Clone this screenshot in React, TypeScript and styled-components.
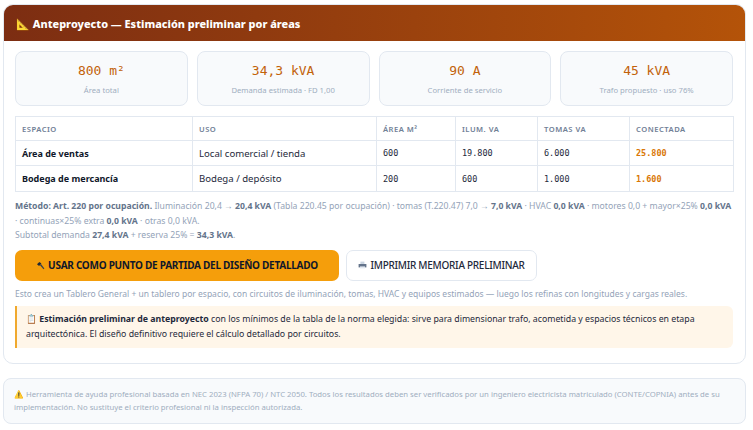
import React from "react"
import styled, { createGlobalStyle } from "styled-components"

const GlobalStyle = createGlobalStyle`
    html, body {
        margin: 0;
        padding: 0;
        background: #fff;
    }
    body {
        font-family: "Noto Sans", "Open Sans", sans-serif;
        color: #0f172a;
    }
`

const Page = styled.div`
    width: 753px;
    height: 430px;
    overflow: hidden;
    padding: 4px 7px 0 3px;
    box-sizing: border-box;
`

const Panel = styled.section`
    border: 1px solid #e2e8f0;
    border-radius: 10px;
    overflow: hidden;
    background: #fff;
`

const PanelHeader = styled.header`
    height: 36px;
    padding: 0 12px;
    display: flex;
    align-items: center;
    gap: 3px;
    color: #fff;
    font-size: 10.9px;
    font-weight: 800;
    background: linear-gradient(90deg, #7c2d12, #b45309);
`

const PanelBody = styled.div`
    padding: 10px 12px 15px 11px;
`

const StatGrid = styled.div`
    display: grid;
    grid-template-columns: repeat(4, 1fr);
    gap: 9px;
    margin-bottom: 10px;
`

const StatCard = styled.div`
    height: 55px;
    box-sizing: border-box;
    border: 1px solid #e2e8f0;
    border-radius: 8px;
    background: #f8fafc;
    display: flex;
    flex-direction: column;
    align-items: center;
    justify-content: center;
`

const StatValue = styled.div`
    font-family: "DejaVu Sans Mono", monospace;
    font-size: 13px;
    line-height: 18px;
    color: #c2620a;
    margin-bottom: 5px;
`

const StatLabel = styled.div`
    font-size: 7.7px;
    line-height: 11px;
    color: #a0aec0;
`

const Table = styled.table`
    width: 100%;
    border-collapse: collapse;
    table-layout: fixed;
    margin-bottom: 7px;
`

const Row = styled.tr<{ $h: number }>`
    height: ${(p) => p.$h}px;
`

const Th = styled.th<{ $w: number }>`
    box-sizing: border-box;
    width: ${(p) => p.$w}px;
    padding: 0 6px;
    border: 1px solid #e2e8f0;
    font-size: 7.6px;
    font-weight: 600;
    letter-spacing: 0.5px;
    text-align: left;
    color: #718096;
`

const Td = styled.td`
    padding: 0 6px;
    border: 1px solid #e2e8f0;
    font-size: 9.6px;
    color: #1e293b;
`

const NameCell = styled(Td)`
    font-size: 9px;
    font-weight: 700;
    color: #0f172a;
`

const NumCell = styled(Td)<{ $hot?: boolean }>`
    font-family: "DejaVu Sans Mono", monospace;
    font-size: 8.5px;
    color: ${(p) => (p.$hot ? "#d97706" : "#1e293b")};
    font-weight: ${(p) => (p.$hot ? 700 : 400)};
`

const Method = styled.p`
    margin: 0 0 7px;
    font-size: 8.67px;
    line-height: 14.5px;
    color: #94a3b8;

    strong {
        color: #64748b;
        font-weight: 700;
    }
`

const Actions = styled.div`
    display: flex;
    gap: 7px;
    margin-bottom: 6px;
`

const ActionButton = styled.button`
    height: 31px;
    box-sizing: border-box;
    border-radius: 7px;
    display: flex;
    align-items: center;
    justify-content: center;
    gap: 3px;
    font-family: inherit;
    font-size: 10px;
    letter-spacing: -0.27px;
    padding: 0;
`

const PrimaryButton = styled(ActionButton)`
    width: 324px;
    border: 0;
    background: #f59e0b;
    color: #0f172a;
    font-weight: 700;
`

const SecondaryButton = styled(ActionButton)`
    width: 191px;
    border: 1px solid #e2e8f0;
    background: #fff;
    color: #1e293b;
    font-weight: 500;
`

const Hint = styled.p`
    margin: 0 0 5px;
    font-size: 8.5px;
    line-height: 14px;
    color: #94a3b8;
`

const Notice = styled.div`
    padding: 6px 10px 6px 9px;
    border-left: 2px solid #f0a92e;
    border-radius: 0 6px 6px 0;
    background: #fff6e9;
    font-size: 8.75px;
    line-height: 15px;
    color: #1e293b;

    strong {
        font-weight: 700;
    }
`

const Disclaimer = styled.footer`
    margin-top: 14px;
    padding: 9px 10px;
    border: 1px solid #e2e8f0;
    border-radius: 8px;
    background: #f8fafc;
    font-size: 7.74px;
    line-height: 13px;
    color: #a0aec0;
`

const HammerIcon = () => (
    <svg width="9" height="9" viewBox="0 0 9 9" aria-hidden="true">
        <path d="M1 3.2 3.4 1l2 1.4-2.3 2.6z" fill="#1f2937" />
        <path d="M3.8 4 5 2.9 8.4 7.4 7.5 8.2z" fill="#374151" />
    </svg>
)

const PrinterIcon = () => (
    <svg width="9" height="8" viewBox="0 0 9 8" aria-hidden="true">
        <path d="M2.4 0.6h4v2.6h-4z" fill="#cbd5e1" />
        <path d="M0.6 3h7.8v3.4H0.6z" fill="#64748b" />
        <path d="M2 5.4h5v2H2z" fill="#e2e8f0" />
    </svg>
)

const stats = [
    { value: "800 m²", label: "Área total" },
    { value: "34,3 kVA", label: "Demanda estimada · FD 1,00" },
    { value: "90 A", label: "Corriente de servicio" },
    { value: "45 kVA", label: "Trafo propuesto · uso 76%" },
]

const columns = [
    { label: "ESPACIO", w: 177 },
    { label: "USO", w: 184 },
    { label: "ÁREA M²", w: 79 },
    { label: "ILUM. VA", w: 82 },
    { label: "TOMAS VA", w: 92 },
    { label: "CONECTADA", w: 104 },
]

const rows = [
    { name: "Área de ventas", uso: "Local comercial / tienda", area: "600", ilum: "19.800", tomas: "6.000", total: "25.800", h: 25 },
    { name: "Bodega de mercancía", uso: "Bodega / depósito", area: "200", ilum: "600", tomas: "1.000", total: "1.600", h: 26 },
]

export default function App() {
    return (
        <Page>
            <GlobalStyle />
            <Panel>
                <PanelHeader>📐 Anteproyecto — Estimación preliminar por áreas</PanelHeader>
                <PanelBody>
                    <StatGrid>
                        {stats.map((s) => (
                            <StatCard key={s.label}>
                                <StatValue>{s.value}</StatValue>
                                <StatLabel>{s.label}</StatLabel>
                            </StatCard>
                        ))}
                    </StatGrid>
                    <Table>
                        <thead>
                            <Row $h={24}>
                                {columns.map((c) => (
                                    <Th key={c.label} $w={c.w}>{c.label}</Th>
                                ))}
                            </Row>
                        </thead>
                        <tbody>
                            {rows.map((r) => (
                                <Row key={r.name} $h={r.h}>
                                    <NameCell>{r.name}</NameCell>
                                    <Td>{r.uso}</Td>
                                    <NumCell>{r.area}</NumCell>
                                    <NumCell>{r.ilum}</NumCell>
                                    <NumCell>{r.tomas}</NumCell>
                                    <NumCell $hot>{r.total}</NumCell>
                                </Row>
                            ))}
                        </tbody>
                    </Table>
                    <Method>
                        <strong>Método: Art. 220 por ocupación.</strong> Iluminación 20,4 → <strong>20,4 kVA</strong> (Tabla 220.45 por ocupación) · tomas (T.220.47) 7,0 → <strong>7,0 kVA</strong> · HVAC <strong>0,0 kVA</strong> · motores 0,0 + mayor×25% <strong>0,0 kVA</strong> · continuas×25% extra <strong>0,0 kVA</strong> · otras 0,0 kVA.
                        <br />
                        Subtotal demanda <strong>27,4 kVA</strong> + reserva 25% = <strong>34,3 kVA</strong>.
                    </Method>
                    <Actions>
                        <PrimaryButton><HammerIcon /> USAR COMO PUNTO DE PARTIDA DEL DISEÑO DETALLADO</PrimaryButton>
                        <SecondaryButton><PrinterIcon /> IMPRIMIR MEMORIA PRELIMINAR</SecondaryButton>
                    </Actions>
                    <Hint>Esto crea un Tablero General + un tablero por espacio, con circuitos de iluminación, tomas, HVAC y equipos estimados — luego los refinas con longitudes y cargas reales.</Hint>
                    <Notice>
                        📋 <strong>Estimación preliminar de anteproyecto</strong> con los mínimos de la tabla de la norma elegida: sirve para dimensionar trafo, acometida y espacios técnicos en etapa arquitectónica. El diseño definitivo requiere el cálculo detallado por circuitos.
                    </Notice>
                </PanelBody>
            </Panel>
            <Disclaimer>
                ⚠️ Herramienta de ayuda profesional basada en NEC 2023 (NFPA 70) / NTC 2050. Todos los resultados deben ser verificados por un ingeniero electricista matriculado (CONTE/COPNIA) antes de su implementación. No sustituye el criterio profesional ni la inspección autorizada.
            </Disclaimer>
        </Page>
    )
}
